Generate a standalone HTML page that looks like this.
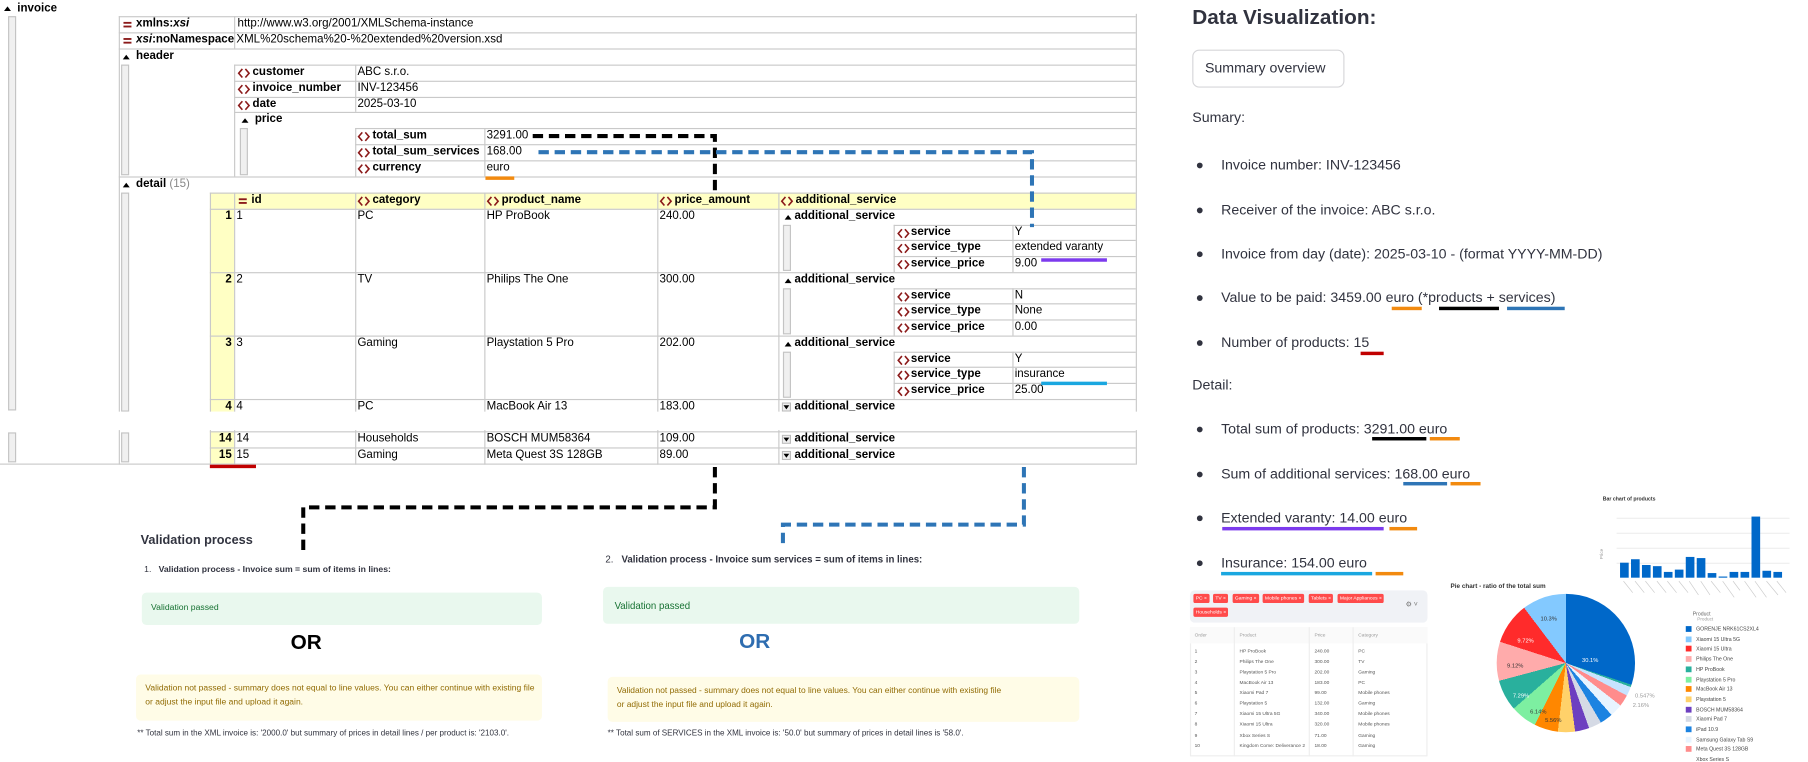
<!DOCTYPE html>
<html><head><meta charset="utf-8">
<style>
body{margin:0;width:1808px;height:759px;overflow:hidden;background:#fff}
#w{position:absolute;left:0;top:0;width:1568px;height:658px;transform:scale(1.15306);transform-origin:0 0;font-family:"Liberation Sans",sans-serif;color:#000}
.a{position:absolute;white-space:nowrap}
.g{font-size:10px;line-height:14px}
.b{font-weight:bold}
.h{position:absolute;height:1px;background:#c9c9c9}
.v{position:absolute;width:1px;background:#c9c9c9}
.sb{position:absolute;width:5px;background:#f0f0f0;border:1px solid #c4c4c4}
.yl{position:absolute;background:#ffffc4}
.st{font-size:12.3px;line-height:16px;color:#31333f}
.dot{position:absolute;width:5px;height:5px;border-radius:50%;background:#31333f}
.tag{position:absolute;height:8px;background:#ff4b4b;color:#fff;font-size:4.3px;line-height:8px;padding:0 2px;border-radius:1.5px}
.tt{font-size:4.2px;color:#555}
.lg{font-size:4.5px;color:#444}
</style></head><body>
<svg width="0" height="0" style="position:absolute">
<defs>
<symbol id="el" viewBox="0 0 11 9"><path d="M4.2 0.8 L1 4.5 L4.2 8.2 M6.8 0.8 L10 4.5 L6.8 8.2" stroke="#8b1a1a" stroke-width="1.4" fill="none"/></symbol>
<symbol id="eq" viewBox="0 0 8 7"><rect x="0" y="1" width="7" height="1.6" fill="#8b1a1a"/><rect x="0" y="4.2" width="7" height="1.6" fill="#8b1a1a"/></symbol>
<symbol id="up" viewBox="0 0 7 7"><path d="M0.5 5.5 L3.5 1.5 L6.5 5.5Z" fill="#000"/></symbol>
<symbol id="dn" viewBox="0 0 8 8"><rect x="0.5" y="0.5" width="7" height="7" fill="#eee" stroke="#bbb"/><path d="M1.5 2.5 L6.5 2.5 L4 6Z" fill="#000"/></symbol>
</defs></svg>
<div id="w">

<div class="yl" style="left:182px;top:167px;width:803px;height:14px"></div>
<div class="yl" style="left:182px;top:181px;width:21px;height:176px"></div>
<div class="yl" style="left:182px;top:374px;width:21px;height:28px"></div>

<div class="h" style="left:103px;top:14px;width:882px"></div>
<div class="h" style="left:103px;top:28px;width:882px"></div>
<div class="h" style="left:103px;top:42px;width:882px"></div>
<div class="h" style="left:203px;top:56px;width:782px"></div>
<div class="h" style="left:203px;top:70px;width:782px"></div>
<div class="h" style="left:203px;top:84px;width:782px"></div>
<div class="h" style="left:203px;top:97px;width:782px"></div>
<div class="h" style="left:308px;top:111px;width:677px"></div>
<div class="h" style="left:308px;top:125px;width:677px"></div>
<div class="h" style="left:308px;top:139px;width:677px"></div>
<div class="h" style="left:103px;top:153px;width:882px"></div>
<div class="h" style="left:182px;top:167px;width:803px"></div>
<div class="h" style="left:182px;top:181px;width:803px"></div>
<div class="h" style="left:182px;top:236px;width:803px"></div>
<div class="h" style="left:182px;top:291px;width:803px"></div>
<div class="h" style="left:182px;top:346px;width:803px"></div>
<div class="h" style="left:182px;top:388px;width:803px"></div>
<div class="h" style="left:0px;top:402px;width:985px"></div>
<div class="h" style="left:775px;top:195px;width:210px"></div>
<div class="h" style="left:775px;top:208px;width:210px"></div>
<div class="h" style="left:775px;top:222px;width:210px"></div>
<div class="h" style="left:775px;top:250px;width:210px"></div>
<div class="h" style="left:775px;top:263px;width:210px"></div>
<div class="h" style="left:775px;top:277px;width:210px"></div>
<div class="h" style="left:775px;top:305px;width:210px"></div>
<div class="h" style="left:775px;top:318px;width:210px"></div>
<div class="h" style="left:775px;top:332px;width:210px"></div>

<div class="v" style="left:985px;top:12px;height:391px"></div>
<div class="v" style="left:103px;top:14px;height:389px"></div>
<div class="v" style="left:203px;top:14px;height:28px"></div>
<div class="v" style="left:203px;top:56px;height:97px"></div>
<div class="v" style="left:308px;top:56px;height:41px"></div>
<div class="v" style="left:308px;top:111px;height:42px"></div>
<div class="v" style="left:420px;top:111px;height:42px"></div>
<div class="v" style="left:182px;top:167px;height:236px"></div>
<div class="v" style="left:203px;top:167px;height:236px"></div>
<div class="v" style="left:308px;top:167px;height:236px"></div>
<div class="v" style="left:420px;top:167px;height:236px"></div>
<div class="v" style="left:570px;top:167px;height:236px"></div>
<div class="v" style="left:675px;top:167px;height:236px"></div>
<div class="v" style="left:775px;top:195px;height:41px"></div>
<div class="v" style="left:878px;top:195px;height:41px"></div>
<div class="v" style="left:775px;top:250px;height:41px"></div>
<div class="v" style="left:878px;top:250px;height:41px"></div>
<div class="v" style="left:775px;top:305px;height:41px"></div>
<div class="v" style="left:878px;top:305px;height:41px"></div>

<div class="sb" style="left:7px;top:14px;height:340px"></div>
<div class="sb" style="left:7px;top:375px;height:24px"></div>
<div class="sb" style="left:105px;top:56px;height:94px"></div>
<div class="sb" style="left:208px;top:111px;height:39px"></div>
<div class="sb" style="left:105px;top:167px;height:188px"></div>
<div class="sb" style="left:105px;top:375px;height:24px"></div>
<div class="sb" style="left:679px;top:195px;height:38px"></div>
<div class="sb" style="left:679px;top:250px;height:38px"></div>
<div class="sb" style="left:679px;top:305px;height:38px"></div>

<svg class="a" style="left:3px;top:4px" width="7" height="7"><use href="#up"/></svg>
<div class="a g b" style="left:15px;top:1px">invoice</div>

<svg class="a" style="left:107px;top:18px" width="8" height="7"><use href="#eq"/></svg>
<div class="a g b" style="left:118px;top:14px">xmlns:<i>xsi</i></div>
<div class="a g" style="left:206px;top:14px">http://www.w3.org/2001/XMLSchema-instance</div>
<svg class="a" style="left:107px;top:32px" width="8" height="7"><use href="#eq"/></svg>
<div class="a g b" style="left:118px;top:28px;width:85px;overflow:hidden"><i>xsi</i>:noNamespaceSchemaLocation</div>
<div class="a g" style="left:205px;top:28px">XML%20schema%20-%20extended%20version.xsd</div>

<svg class="a" style="left:106px;top:46px" width="7" height="7"><use href="#up"/></svg>
<div class="a g b" style="left:118px;top:42px">header</div>

<svg class="a" style="left:206px;top:59px" width="11" height="9"><use href="#el"/></svg>
<div class="a g b" style="left:219px;top:56px">customer</div>
<div class="a g" style="left:310px;top:56px">ABC s.r.o.</div>
<svg class="a" style="left:206px;top:73px" width="11" height="9"><use href="#el"/></svg>
<div class="a g b" style="left:219px;top:70px">invoice_number</div>
<div class="a g" style="left:310px;top:70px">INV-123456</div>
<svg class="a" style="left:206px;top:87px" width="11" height="9"><use href="#el"/></svg>
<div class="a g b" style="left:219px;top:84px">date</div>
<div class="a g" style="left:310px;top:84px">2025-03-10</div>

<svg class="a" style="left:209px;top:101px" width="7" height="7"><use href="#up"/></svg>
<div class="a g b" style="left:221px;top:97px">price</div>

<svg class="a" style="left:310px;top:114px" width="11" height="9"><use href="#el"/></svg>
<div class="a g b" style="left:323px;top:111px">total_sum</div>
<div class="a g" style="left:422px;top:111px">3291.00</div>
<svg class="a" style="left:310px;top:128px" width="11" height="9"><use href="#el"/></svg>
<div class="a g b" style="left:323px;top:125px">total_sum_services</div>
<div class="a g" style="left:422px;top:125px">168.00</div>
<svg class="a" style="left:310px;top:142px" width="11" height="9"><use href="#el"/></svg>
<div class="a g b" style="left:323px;top:139px">currency</div>
<div class="a g" style="left:422px;top:139px">euro</div>

<svg class="a" style="left:106px;top:157px" width="7" height="7"><use href="#up"/></svg>
<div class="a g b" style="left:118px;top:153px">detail <span style="font-weight:normal;color:#888">(15)</span></div>

<svg class="a" style="left:207px;top:171px" width="8" height="7"><use href="#eq"/></svg>
<div class="a g b" style="left:218px;top:167px">id</div>
<svg class="a" style="left:310px;top:170px" width="11" height="9"><use href="#el"/></svg>
<div class="a g b" style="left:323px;top:167px">category</div>
<svg class="a" style="left:422px;top:170px" width="11" height="9"><use href="#el"/></svg>
<div class="a g b" style="left:435px;top:167px">product_name</div>
<svg class="a" style="left:572px;top:170px" width="11" height="9"><use href="#el"/></svg>
<div class="a g b" style="left:585px;top:167px">price_amount</div>
<svg class="a" style="left:677px;top:170px" width="11" height="9"><use href="#el"/></svg>
<div class="a g b" style="left:690px;top:167px">additional_service</div>

<div class="a g b" style="left:182px;top:181px;width:19px;text-align:right">1</div>
<div class="a g" style="left:205px;top:181px">1</div>
<div class="a g" style="left:310px;top:181px">PC</div>
<div class="a g" style="left:422px;top:181px">HP ProBook</div>
<div class="a g" style="left:572px;top:181px">240.00</div>
<svg class="a" style="left:680px;top:185px" width="7" height="7"><use href="#up"/></svg>
<div class="a g b" style="left:689px;top:181px">additional_service</div>
<svg class="a" style="left:778px;top:198px" width="11" height="9"><use href="#el"/></svg>
<div class="a g b" style="left:790px;top:195px">service</div>
<div class="a g" style="left:880px;top:195px">Y</div>
<svg class="a" style="left:778px;top:211px" width="11" height="9"><use href="#el"/></svg>
<div class="a g b" style="left:790px;top:208px">service_type</div>
<div class="a g" style="left:880px;top:208px">extended varanty</div>
<svg class="a" style="left:778px;top:225px" width="11" height="9"><use href="#el"/></svg>
<div class="a g b" style="left:790px;top:222px">service_price</div>
<div class="a g" style="left:880px;top:222px">9.00</div>

<div class="a g b" style="left:182px;top:236px;width:19px;text-align:right">2</div>
<div class="a g" style="left:205px;top:236px">2</div>
<div class="a g" style="left:310px;top:236px">TV</div>
<div class="a g" style="left:422px;top:236px">Philips The One</div>
<div class="a g" style="left:572px;top:236px">300.00</div>
<svg class="a" style="left:680px;top:240px" width="7" height="7"><use href="#up"/></svg>
<div class="a g b" style="left:689px;top:236px">additional_service</div>
<svg class="a" style="left:778px;top:253px" width="11" height="9"><use href="#el"/></svg>
<div class="a g b" style="left:790px;top:250px">service</div>
<div class="a g" style="left:880px;top:250px">N</div>
<svg class="a" style="left:778px;top:266px" width="11" height="9"><use href="#el"/></svg>
<div class="a g b" style="left:790px;top:263px">service_type</div>
<div class="a g" style="left:880px;top:263px">None</div>
<svg class="a" style="left:778px;top:280px" width="11" height="9"><use href="#el"/></svg>
<div class="a g b" style="left:790px;top:277px">service_price</div>
<div class="a g" style="left:880px;top:277px">0.00</div>

<div class="a g b" style="left:182px;top:291px;width:19px;text-align:right">3</div>
<div class="a g" style="left:205px;top:291px">3</div>
<div class="a g" style="left:310px;top:291px">Gaming</div>
<div class="a g" style="left:422px;top:291px">Playstation 5 Pro</div>
<div class="a g" style="left:572px;top:291px">202.00</div>
<svg class="a" style="left:680px;top:295px" width="7" height="7"><use href="#up"/></svg>
<div class="a g b" style="left:689px;top:291px">additional_service</div>
<svg class="a" style="left:778px;top:308px" width="11" height="9"><use href="#el"/></svg>
<div class="a g b" style="left:790px;top:305px">service</div>
<div class="a g" style="left:880px;top:305px">Y</div>
<svg class="a" style="left:778px;top:321px" width="11" height="9"><use href="#el"/></svg>
<div class="a g b" style="left:790px;top:318px">service_type</div>
<div class="a g" style="left:880px;top:318px">insurance</div>
<svg class="a" style="left:778px;top:335px" width="11" height="9"><use href="#el"/></svg>
<div class="a g b" style="left:790px;top:332px">service_price</div>
<div class="a g" style="left:880px;top:332px">25.00</div>

<div class="a g b" style="left:182px;top:346px;width:19px;text-align:right">4</div>
<div class="a g" style="left:205px;top:346px">4</div>
<div class="a g" style="left:310px;top:346px">PC</div>
<div class="a g" style="left:422px;top:346px">MacBook Air 13</div>
<div class="a g" style="left:572px;top:346px">183.00</div>
<svg class="a" style="left:678px;top:349px" width="8" height="8"><use href="#dn"/></svg>
<div class="a g b" style="left:689px;top:346px">additional_service</div>

<div class="a" style="left:0;top:357px;width:990px;height:16px;background:#fff"></div>
<div class="h" style="left:182px;top:374px;width:803px"></div>

<div class="a g b" style="left:182px;top:374px;width:19px;text-align:right">14</div>
<div class="a g" style="left:205px;top:374px">14</div>
<div class="a g" style="left:310px;top:374px">Households</div>
<div class="a g" style="left:422px;top:374px">BOSCH MUM58364</div>
<div class="a g" style="left:572px;top:374px">109.00</div>
<svg class="a" style="left:678px;top:377px" width="8" height="8"><use href="#dn"/></svg>
<div class="a g b" style="left:689px;top:374px">additional_service</div>
<div class="a g b" style="left:182px;top:388px;width:19px;text-align:right">15</div>
<div class="a g" style="left:205px;top:388px">15</div>
<div class="a g" style="left:310px;top:388px">Gaming</div>
<div class="a g" style="left:422px;top:388px">Meta Quest 3S 128GB</div>
<div class="a g" style="left:572px;top:388px">89.00</div>
<svg class="a" style="left:678px;top:391px" width="8" height="8"><use href="#dn"/></svg>
<div class="a g b" style="left:689px;top:388px">additional_service</div>

<div class="a b" style="left:122px;top:463px;font-size:11px;color:#31333f">Validation process</div>
<div class="a" style="left:125px;top:489px;font-size:7.5px;color:#31333f">1.&nbsp;&nbsp;&nbsp;<b>Validation process - Invoice sum = sum of items in lines:</b></div>
<div class="a" style="left:123px;top:514px;width:347px;height:28px;background:#e9f8ee;border-radius:4px"></div>
<div class="a" style="left:131px;top:522px;font-size:7.5px;color:#177233">Validation passed</div>
<div class="a b" style="left:252px;top:547px;font-size:18px;color:#000">OR</div>
<div class="a" style="left:118px;top:585px;width:352px;height:40px;background:#fffce7;border-radius:4px"></div>
<div class="a" style="left:126px;top:591px;font-size:7.4px;line-height:12px;color:#926c05;white-space:normal;width:342px">Validation not passed - summary does not equal to line values. You can either continue with existing file or adjust the input file and upload it again.</div>
<div class="a" style="left:119px;top:633px;font-size:7px;color:#31333f">** Total sum in the XML invoice is: '2000.0' but summary of prices in detail lines / per product is: '2103.0'.</div>

<div class="a" style="left:525px;top:480px;font-size:8.4px;color:#31333f">2.&nbsp;&nbsp;&nbsp;<b>Validation process - Invoice sum services = sum of items in lines:</b></div>
<div class="a" style="left:523px;top:509px;width:413px;height:32px;background:#e9f8ee;border-radius:4px"></div>
<div class="a" style="left:533px;top:520px;font-size:8.4px;color:#177233">Validation passed</div>
<div class="a b" style="left:641px;top:546px;font-size:18px;color:#2e6db0">OR</div>
<div class="a" style="left:527px;top:587px;width:409px;height:39px;background:#fffce7;border-radius:4px"></div>
<div class="a" style="left:535px;top:593px;font-size:7.3px;line-height:12px;color:#926c05;white-space:normal;width:340px">Validation not passed - summary does not equal to line values. You can either continue with existing file or adjust the input file and upload it again.</div>
<div class="a" style="left:527px;top:633px;font-size:7px;color:#31333f">** Total sum of SERVICES in the XML invoice is: '50.0' but summary of prices in detail lines is '58.0'.</div>

<div class="a b" style="left:1034px;top:5px;font-size:18px;color:#31333f">Data Visualization:</div>
<div class="a" style="left:1034px;top:43px;width:132px;height:33px;border:1px solid #d6d6d9;border-radius:6px;box-sizing:border-box"></div>
<div class="a" style="left:1045px;top:52px;font-size:12.3px;color:#31333f">Summary overview</div>
<div class="a st" style="left:1034px;top:94px">Sumary:</div>
<div class="dot" style="left:1038px;top:141px"></div><div class="a st" style="left:1059px;top:135px">Invoice number: INV-123456</div>
<div class="dot" style="left:1038px;top:180px"></div><div class="a st" style="left:1059px;top:174px">Receiver of the invoice: ABC s.r.o.</div>
<div class="dot" style="left:1038px;top:218px"></div><div class="a st" style="left:1059px;top:212px">Invoice from day (date): 2025-03-10 - (format YYYY-MM-DD)</div>
<div class="dot" style="left:1038px;top:256px"></div><div class="a st" style="left:1059px;top:250px">Value to be paid: 3459.00 euro (*products + services)</div>
<div class="dot" style="left:1038px;top:295px"></div><div class="a st" style="left:1059px;top:289px">Number of products: 15</div>
<div class="a st" style="left:1034px;top:326px">Detail:</div>
<div class="dot" style="left:1038px;top:370px"></div><div class="a st" style="left:1059px;top:364px">Total sum of products: 3291.00 euro</div>
<div class="dot" style="left:1038px;top:409px"></div><div class="a st" style="left:1059px;top:403px">Sum of additional services: 168.00 euro</div>
<div class="dot" style="left:1038px;top:447px"></div><div class="a st" style="left:1059px;top:441px">Extended varanty: 14.00 euro</div>
<div class="dot" style="left:1038px;top:486px"></div><div class="a st" style="left:1059px;top:480px">Insurance: 154.00 euro</div>

<div class="a b" style="left:1390px;top:430px;font-size:4.5px;color:#333">Bar chart of products</div>
<div class="a" style="left:1384px;top:478px;font-size:4px;color:#999;transform:rotate(-90deg)">Price</div>
<div class="h" style="left:1402px;top:449px;width:150px;background:#eee"></div>
<div class="h" style="left:1402px;top:462px;width:150px;background:#eee"></div>
<div class="h" style="left:1402px;top:475px;width:150px;background:#eee"></div>
<div class="h" style="left:1402px;top:488px;width:150px;background:#eee"></div>
<svg class="a" style="left:1400px;top:440px" width="160" height="100">
<g fill="#0068c9">
<rect x="5" y="48" width="7.5" height="13"/><rect x="14.5" y="45" width="7.5" height="16"/><rect x="24" y="50" width="7.5" height="11"/><rect x="33.5" y="51" width="7.5" height="10"/><rect x="43" y="56" width="7.5" height="5"/><rect x="52.5" y="54" width="7.5" height="7"/><rect x="62" y="43" width="7.5" height="18"/><rect x="71.5" y="44" width="7.5" height="17"/><rect x="81" y="57" width="7.5" height="4"/><rect x="90.5" y="60" width="7.5" height="1"/><rect x="100" y="56" width="7.5" height="5"/><rect x="109.5" y="56" width="7.5" height="5"/><rect x="119" y="8" width="7.5" height="53"/><rect x="128.5" y="55" width="7.5" height="6"/><rect x="138" y="56" width="7.5" height="5"/>
</g>
<g stroke="#ccc" stroke-width="0.6">
<path d="M8 64 l8 10 M18 64 l8 10 M27 64 l8 10 M37 64 l8 10 M46 64 l8 10 M56 64 l8 10 M65 64 l8 12 M75 64 l8 12 M84 64 l8 10 M94 64 l10 14 M103 64 l6 8 M113 64 l10 14 M122 64 l10 14 M132 64 l10 12 M141 64 l8 10"/>
</g>
<text x="72" y="98" font-size="4" fill="#999" font-family="Liberation Sans">Product</text>
</svg>

<div class="a" style="left:1032px;top:512px;width:206px;height:28px;background:#f0f2f6;border-radius:4px"></div>
<div class="tag" style="left:1035px;top:515px">PC ×</div>
<div class="tag" style="left:1052px;top:515px">TV ×</div>
<div class="tag" style="left:1069px;top:515px">Gaming ×</div>
<div class="tag" style="left:1095px;top:515px">Mobile phones ×</div>
<div class="tag" style="left:1135px;top:515px">Tablets ×</div>
<div class="tag" style="left:1160px;top:515px">Major Appliances ×</div>
<div class="tag" style="left:1035px;top:527px">Households ×</div>
<div class="a" style="left:1219px;top:521px;font-size:6px;color:#777">⚙ ˅</div>
<div class="a" style="left:1032px;top:544px;width:206px;height:112px;border:1px solid #eee;box-sizing:border-box"></div>
<div class="a" style="left:1032px;top:544px;width:206px;height:14px;background:#fafafa"></div>
<div class="a tt" style="left:1036px;top:548px;color:#999">Order</div>
<div class="a tt" style="left:1075px;top:548px;color:#999">Product</div>
<div class="a tt" style="left:1140px;top:548px;color:#999">Price</div>
<div class="a tt" style="left:1178px;top:548px;color:#999">Category</div>
<div class="v" style="left:1070px;top:544px;height:112px;background:#eee"></div>
<div class="v" style="left:1135px;top:544px;height:112px;background:#eee"></div>
<div class="v" style="left:1173px;top:544px;height:112px;background:#eee"></div>
<div class="a" style="left:1032px;top:558px;width:206px">
<div style="position:relative">
<div class="a tt" style="left:4px;top:4px">1</div><div class="a tt" style="left:43px;top:4px">HP ProBook</div><div class="a tt" style="left:108px;top:4px">240.00</div><div class="a tt" style="left:146px;top:4px">PC</div>
<div class="a tt" style="left:4px;top:13px">2</div><div class="a tt" style="left:43px;top:13px">Philips The One</div><div class="a tt" style="left:108px;top:13px">300.00</div><div class="a tt" style="left:146px;top:13px">TV</div>
<div class="a tt" style="left:4px;top:22px">3</div><div class="a tt" style="left:43px;top:22px">Playstation 5 Pro</div><div class="a tt" style="left:108px;top:22px">202.00</div><div class="a tt" style="left:146px;top:22px">Gaming</div>
<div class="a tt" style="left:4px;top:31px">4</div><div class="a tt" style="left:43px;top:31px">MacBook Air 13</div><div class="a tt" style="left:108px;top:31px">183.00</div><div class="a tt" style="left:146px;top:31px">PC</div>
<div class="a tt" style="left:4px;top:40px">5</div><div class="a tt" style="left:43px;top:40px">Xiaomi Pad 7</div><div class="a tt" style="left:108px;top:40px">99.00</div><div class="a tt" style="left:146px;top:40px">Mobile phones</div>
<div class="a tt" style="left:4px;top:49px">6</div><div class="a tt" style="left:43px;top:49px">Playstation 5</div><div class="a tt" style="left:108px;top:49px">132.00</div><div class="a tt" style="left:146px;top:49px">Gaming</div>
<div class="a tt" style="left:4px;top:58px">7</div><div class="a tt" style="left:43px;top:58px">Xiaomi 15 Ultra 5G</div><div class="a tt" style="left:108px;top:58px">340.00</div><div class="a tt" style="left:146px;top:58px">Mobile phones</div>
<div class="a tt" style="left:4px;top:67px">8</div><div class="a tt" style="left:43px;top:67px">Xiaomi 15 Ultra</div><div class="a tt" style="left:108px;top:67px">320.00</div><div class="a tt" style="left:146px;top:67px">Mobile phones</div>
<div class="a tt" style="left:4px;top:77px">9</div><div class="a tt" style="left:43px;top:77px">Xbox Series S</div><div class="a tt" style="left:108px;top:77px">71.00</div><div class="a tt" style="left:146px;top:77px">Gaming</div>
<div class="a tt" style="left:4px;top:86px">10</div><div class="a tt" style="left:43px;top:86px">Kingdom Come: Deliverance 2</div><div class="a tt" style="left:108px;top:86px">18.00</div><div class="a tt" style="left:146px;top:86px">Gaming</div>
</div></div>

<div class="a b" style="left:1258px;top:506px;font-size:5.5px;color:#333">Pie chart - ratio of the total sum</div>
<div class="a" style="left:1298px;top:515px;width:120px;height:120px;border-radius:50%;background:conic-gradient(#0068c9 0 30.1%,#29b09d 30.1% 30.65%,#c7e3ff 30.65% 32.81%,#ff8c8c 32.81% 35.51%,#e8f4ff 35.51% 38.52%,#1c83e1 38.52% 41.53%,#d5dae5 41.53% 44.54%,#6d3fc0 44.54% 47.85%,#ffd16a 47.85% 51.86%,#ff8700 51.86% 57.42%,#7defa1 57.42% 63.56%,#29b09d 63.56% 70.85%,#ffabab 70.85% 79.97%,#ff2b2b 79.97% 89.69%,#83c9ff 89.69% 100%)"></div>
<div class="a" style="left:1372px;top:570px;font-size:5px;color:#fff">30.1%</div>
<div class="a" style="left:1336px;top:534px;font-size:5px;color:#333">10.3%</div>
<div class="a" style="left:1316px;top:553px;font-size:5px;color:#fff">9.72%</div>
<div class="a" style="left:1307px;top:575px;font-size:5px;color:#333">9.12%</div>
<div class="a" style="left:1312px;top:601px;font-size:5px;color:#fff">7.29%</div>
<div class="a" style="left:1327px;top:615px;font-size:5px;color:#333">6.14%</div>
<div class="a" style="left:1340px;top:622px;font-size:5px;color:#333">5.56%</div>
<div class="a" style="left:1418px;top:601px;font-size:5px;color:#999">0.547%</div>
<div class="a" style="left:1416px;top:609px;font-size:5px;color:#999">2.16%</div>
<div class="a" style="left:1468px;top:530px;font-size:4.5px;color:#666">Product</div>
<div class="a" style="left:1462px;top:543px">
<div style="position:relative">
<div class="a" style="left:0;top:0;width:5px;height:5px;background:#0068c9"></div><div class="a lg" style="left:9px;top:0">GORENJE NRK61CS2XL4</div>
<div class="a" style="left:0;top:8.7px;width:5px;height:5px;background:#83c9ff"></div><div class="a lg" style="left:9px;top:8.7px">Xiaomi 15 Ultra 5G</div>
<div class="a" style="left:0;top:17.4px;width:5px;height:5px;background:#ff2b2b"></div><div class="a lg" style="left:9px;top:17.4px">Xiaomi 15 Ultra</div>
<div class="a" style="left:0;top:26.1px;width:5px;height:5px;background:#ffabab"></div><div class="a lg" style="left:9px;top:26.1px">Philips The One</div>
<div class="a" style="left:0;top:34.8px;width:5px;height:5px;background:#29b09d"></div><div class="a lg" style="left:9px;top:34.8px">HP ProBook</div>
<div class="a" style="left:0;top:43.5px;width:5px;height:5px;background:#7defa1"></div><div class="a lg" style="left:9px;top:43.5px">Playstation 5 Pro</div>
<div class="a" style="left:0;top:52.2px;width:5px;height:5px;background:#ff8700"></div><div class="a lg" style="left:9px;top:52.2px">MacBook Air 13</div>
<div class="a" style="left:0;top:60.9px;width:5px;height:5px;background:#ffd16a"></div><div class="a lg" style="left:9px;top:60.9px">Playstation 5</div>
<div class="a" style="left:0;top:69.6px;width:5px;height:5px;background:#6d3fc0"></div><div class="a lg" style="left:9px;top:69.6px">BOSCH MUM58364</div>
<div class="a" style="left:0;top:78.3px;width:5px;height:5px;background:#d5dae5"></div><div class="a lg" style="left:9px;top:78.3px">Xiaomi Pad 7</div>
<div class="a" style="left:0;top:87px;width:5px;height:5px;background:#1c83e1"></div><div class="a lg" style="left:9px;top:87px">iPad 10.9</div>
<div class="a" style="left:0;top:95.7px;width:5px;height:5px;background:#e8f4ff"></div><div class="a lg" style="left:9px;top:95.7px">Samsung Galaxy Tab S9</div>
<div class="a" style="left:0;top:104.4px;width:5px;height:5px;background:#ff8c8c"></div><div class="a lg" style="left:9px;top:104.4px">Meta Quest 3S 128GB</div>
<div class="a lg" style="left:9px;top:113.1px">Xbox Series S</div>
</div></div>

<svg class="a" style="left:0;top:0" width="1568" height="658">
<g fill="none" stroke-width="3.5" stroke-dasharray="9 5">
<path d="M462 118 H620 V168" stroke="#000"/>
<path d="M620 405 V440 H263 V478" stroke="#000"/>
<path d="M467 132 H895 V197" stroke="#2e75b6"/>
<path d="M888 405 V455 H679 V476" stroke="#2e75b6"/>
</g>
<rect x="421" y="153" width="25" height="3" fill="#f28a0f"/>
<rect x="903" y="224" width="57" height="3" fill="#7c3aed"/>
<rect x="903" y="331" width="57" height="3" fill="#1aa7e0"/>
<rect x="182" y="403" width="40" height="3" fill="#c00000"/>
<rect x="1207" y="266" width="26" height="3" fill="#f28a0f"/>
<rect x="1248" y="266" width="52" height="3" fill="#000"/>
<rect x="1307" y="266" width="50" height="3" fill="#2e75b6"/>
<rect x="1180" y="305" width="20" height="3" fill="#c00000"/>
<rect x="1190" y="379" width="47" height="3" fill="#000"/>
<rect x="1240" y="379" width="26" height="3" fill="#f28a0f"/>
<rect x="1217" y="418" width="38" height="3" fill="#2e75b6"/>
<rect x="1258" y="418" width="26" height="3" fill="#f28a0f"/>
<rect x="1060" y="457" width="140" height="3" fill="#7c3aed"/>
<rect x="1205" y="457" width="24" height="3" fill="#f28a0f"/>
<rect x="1059" y="496" width="131" height="3" fill="#1aa7e0"/>
<rect x="1193" y="496" width="24" height="3" fill="#f28a0f"/>
</svg>

</div>
</body></html>
